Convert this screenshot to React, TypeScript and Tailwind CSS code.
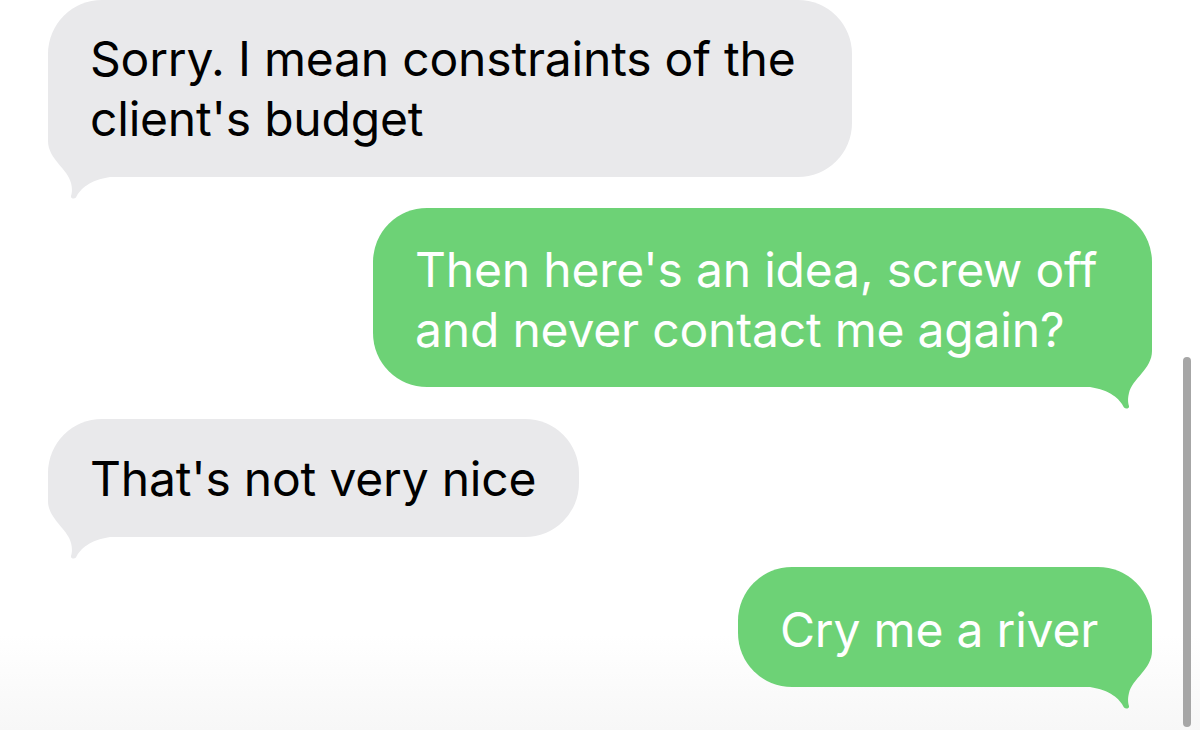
import React from "react";

const FONT = { fontFamily: '"Inter", "Liberation Sans", sans-serif' };

function Tail({ side, color }: { side: "left" | "right"; color: string }) {
  return (
    <svg
      className={
        "absolute bottom-[-22px] w-[62px] h-[82px] " +
        (side === "left" ? "left-0" : "right-0 -scale-x-100")
      }
      viewBox="0 -60 62 82"
      aria-hidden
    >
      <path
        d="M0 -60 L0 -36 C0 -18 20 -8 23 6 C24.5 12 24 16 23 19 C22.5 21.5 26 22.5 28 20.5 C32 12 42 3 62 0 L62 -60 Z"
        fill={color}
      />
    </svg>
  );
}

function Bubble({
  side,
  w,
  h,
  pt,
  children,
}: {
  side: "left" | "right";
  w: string;
  h: string;
  pt: string;
  children: React.ReactNode;
}) {
  const isLeft = side === "left";
  return (
    <div
      className={
        "relative rounded-[54px] text-[48px] leading-[60px] whitespace-nowrap pl-[42px] tracking-[-0.2px] " +
        w +
        " " +
        h +
        " " +
        pt +
        " " +
        (isLeft ? "self-start bg-[#e9e9eb] text-black" : "self-end bg-[#6dd276] text-white")
      }
      style={FONT}
    >
      <Tail side={side} color={isLeft ? "#e9e9eb" : "#6dd276"} />
      <div className="relative">{children}</div>
    </div>
  );
}

export default function App() {
  return (
    <div className="relative w-[1200px] h-[730px] overflow-hidden bg-[linear-gradient(to_bottom,#ffffff_0%,#ffffff_87%,#f7f7f7_100%)]">
      <div className="flex flex-col pl-[48px] pr-[48px]">
        <Bubble side="left" w="w-[804px]" h="h-[177px]" pt="pt-[29px]">
          Sorry. I mean constraints of the
          <br />
          client's budget
        </Bubble>
        <div className="h-[31px]" />
        <Bubble side="right" w="w-[779px]" h="h-[179px]" pt="pt-[32px]">
          Then here's an idea, screw off
          <br />
          and never contact me again?
        </Bubble>
        <div className="h-[32px]" />
        <Bubble side="left" w="w-[531px]" h="h-[118px]" pt="pt-[30px]">
          That's not very nice
        </Bubble>
        <div className="h-[30px]" />
        <Bubble side="right" w="w-[414px]" h="h-[120px]" pt="pt-[33px]">
          Cry me a river
        </Bubble>
      </div>
      <div className="absolute left-[1183px] top-[357px] w-[8px] h-[370px] rounded-full bg-[#a6a6a6]" />
    </div>
  );
}
